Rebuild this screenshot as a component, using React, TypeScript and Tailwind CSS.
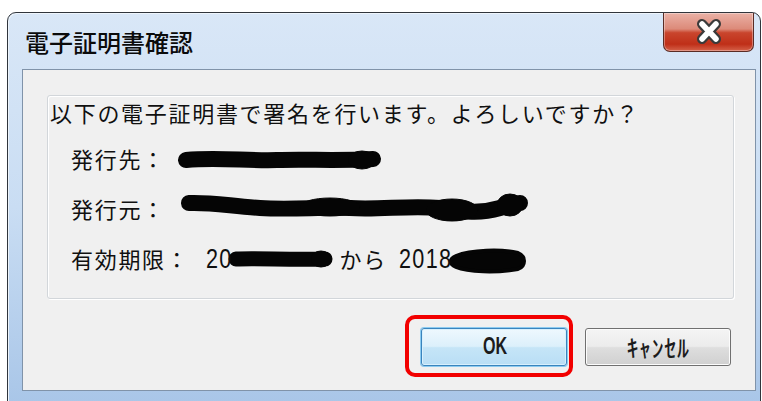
import React from "react";

const jp = { fontFamily: '"Noto Sans CJK JP", "Noto Sans", sans-serif' };
const latin = { fontFamily: '"Liberation Sans", Arial, sans-serif' };

// narrow, tall digits like the old UI Gothic face
const Digits: React.FC<{ text: string; w: string }> = ({ text, w }) => (
    <span className={`inline-block overflow-visible whitespace-nowrap ${w}`}>
        <span className="inline-block origin-left scale-x-80 text-[27px] leading-[28px]" style={latin}>
            {text}
        </span>
    </span>
);

const CloseGlyph = () => (
    <svg width="30" height="26" viewBox="0 0 30 26">
        <path d="M8 5 L22 20 M22 5 L8 20" stroke="#3a3a3a" strokeWidth="10" strokeLinecap="round" />
        <path d="M8 5 L22 20 M22 5 L8 20" stroke="#ffffff" strokeWidth="5.5" strokeLinecap="round" />
    </svg>
);

// hand-drawn marker strokes over the certificate fields
const Scribble: React.FC<{ w: number; h: number; children: React.ReactNode; className?: string }> = ({
    w,
    h,
    children,
    className,
}) => (
    <svg width={w} height={h} viewBox={`0 0 ${w} ${h}`} className={`shrink-0 overflow-visible ${className ?? ""}`}>
        <g fill="#050505" stroke="#050505" strokeLinecap="round" strokeLinejoin="round">
            {children}
        </g>
    </svg>
);

export default function App() {
    return (
        <div className="h-[401px] overflow-hidden bg-white pl-[7px] pt-[12px]">
            <div className="flex h-[392px] w-[754px] flex-col rounded-t-[9px] border border-[#30353c] bg-gradient-to-b from-[#d9e7f7] via-[#c9ddf3] to-[#a9c6e8] shadow-[inset_1px_1px_0_#eef5fc]">
                {/* title bar */}
                <div className="flex h-[56px] shrink-0 items-start justify-between">
                    <span className="self-center pl-[17px] pt-[1px] text-[24px] font-medium leading-[30px] text-[#0b0b0b]" style={jp}>
                        電子証明書確認
                    </span>
                    <button className="mr-[6px] flex h-[39px] w-[91px] items-center justify-center rounded-b-[7px] border border-t-0 border-[#5a2c25] bg-[linear-gradient(to_bottom,#eab1a6_0%,#dc8a79_42%,#c9452d_52%,#bf2f18_82%,#d5624a_100%)] shadow-[inset_0_0_0_1px_rgba(255,255,255,0.35)]">
                        <CloseGlyph />
                    </button>
                </div>

                {/* client area */}
                <div className="ml-[14px] mr-[4px] flex h-[322px] flex-col border border-[#8093a9] bg-[#f0f0f0]">
                    <div
                        className="ml-[24px] mt-[25px] h-[204px] w-[687px] rounded-[3px] border border-[#d2d6da] pl-[2px] pt-[2px] text-[22px] leading-[28px] tracking-[1.7px] text-[#101010] shadow-[inset_1px_1px_0_#ffffff,1px_1px_0_#ffffff]"
                        style={jp}
                    >
                        <div>以下の電子証明書で署名を行います。よろしいですか？</div>
                        <div className="mt-[18px] flex flex-col gap-[22px] pl-[21px]">
                            <div className="flex h-[28px] items-center">
                                <span>発行先：</span>
                                <Scribble w={205} h={24} className="ml-[11px] mt-[4px]">
                                    <path d="M9 12 C40 9 70 13 100 12 C130 11 160 13 196 11" strokeWidth="16" fill="none" />
                                    <ellipse cx="185" cy="12" rx="14" ry="9" />
                                </Scribble>
                            </div>
                            <div className="flex h-[28px] items-center">
                                <span>発行元：</span>
                                <Scribble w={348} h={30} className="ml-[14px] mt-[2px]">
                                    <path
                                        d="M9 9 C30 8 50 12 80 14 C110 16 140 13 170 14 C200 16 230 11 260 14 C285 18 300 20 320 14 C330 11 336 9 340 9"
                                        strokeWidth="16"
                                        fill="none"
                                    />
                                    <ellipse cx="272" cy="16" rx="26" ry="11" />
                                    <ellipse cx="330" cy="11" rx="13" ry="11" />
                                    <ellipse cx="150" cy="13" rx="30" ry="9" />
                                </Scribble>
                            </div>
                            <div className="flex h-[28px] items-center">
                                <span>有効期限：</span>
                                <span className="ml-[16px]">
                                    <Digits text="20" w="w-[23px]" />
                                </span>
                                <Scribble w={104} h={24} className="mt-[2px]">
                                    <path d="M7 12 C30 11 60 13 96 12" strokeWidth="15" fill="none" />
                                    <ellipse cx="92" cy="12" rx="10" ry="8" />
                                </Scribble>
                                <span className="ml-[7px]">から</span>
                                <span className="ml-[12px]">
                                    <Digits text="2018" w="w-[47px]" />
                                </span>
                                <Scribble w={82} h={30} className="mt-[1px]">
                                    <path d="M10 12 C25 6 55 5 72 9 C80 12 80 22 72 25 C50 29 22 28 10 23 C3 20 3 15 10 12 Z" strokeWidth="4" />
                                </Scribble>
                            </div>
                        </div>
                    </div>

                    {/* buttons */}
                    <div className="mr-[24px] mt-[29px] flex justify-end gap-[18px]">
                        <button className="relative flex h-[38px] w-[146px] items-center justify-center rounded-[3px] border border-[#3a84bd] bg-[linear-gradient(to_bottom,#eef8fe_0%,#dcf0fb_48%,#c5e5f7_52%,#b9def5_100%)] shadow-[0_0_0_1px_#8ccbf0,inset_0_0_0_1px_#d8f0fd]">
                            <span className="inline-block w-[23px] overflow-visible whitespace-nowrap">
                                <span className="inline-block origin-left scale-x-70 text-[23px] font-bold leading-[22px] text-[#1c1c1c]" style={latin}>
                                    OK
                                </span>
                            </span>
                            <span className="pointer-events-none absolute -bottom-[12px] -left-[17px] -right-[7px] -top-[14px] rounded-[10px] border-[4px] border-[#f20000]" />
                        </button>
                        <button
                            className="flex h-[38px] w-[146px] items-center justify-center rounded-[3px] border border-[#707070] bg-[linear-gradient(to_bottom,#f4f4f4_0%,#ececec_48%,#dedede_52%,#d0d0d0_100%)] text-[24px] font-medium leading-[22px] tracking-[0.6px] text-[#1c1c1c] shadow-[inset_0_0_0_1px_#fcfcfc]"
                            style={jp}
                        >
                            ｷｬﾝｾﾙ
                        </button>
                    </div>
                </div>
            </div>
        </div>
    );
}
